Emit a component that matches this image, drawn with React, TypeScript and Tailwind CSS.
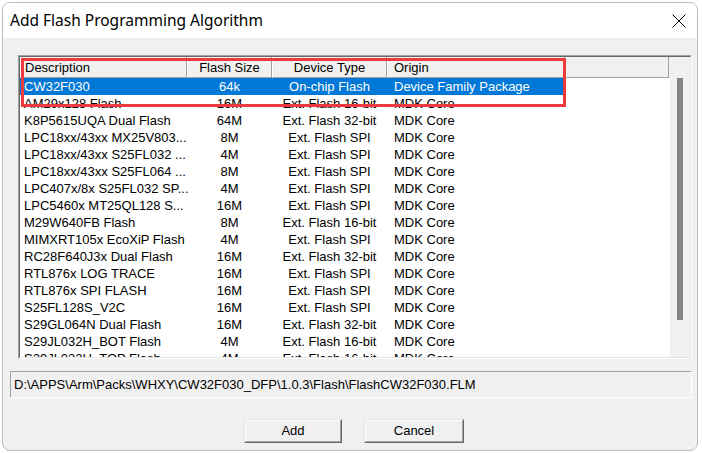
import React from "react";

type Algo = {
  name: string;
  size: string;
  type: string;
  origin: string;
};

const algorithms: Algo[] = [
  { name: "CW32F030", size: "64k", type: "On-chip Flash", origin: "Device Family Package" },
  { name: "AM29x128 Flash", size: "16M", type: "Ext. Flash 16-bit", origin: "MDK Core" },
  { name: "K8P5615UQA Dual Flash", size: "64M", type: "Ext. Flash 32-bit", origin: "MDK Core" },
  { name: "LPC18xx/43xx MX25V803...", size: "8M", type: "Ext. Flash SPI", origin: "MDK Core" },
  { name: "LPC18xx/43xx S25FL032 ...", size: "4M", type: "Ext. Flash SPI", origin: "MDK Core" },
  { name: "LPC18xx/43xx S25FL064 ...", size: "8M", type: "Ext. Flash SPI", origin: "MDK Core" },
  { name: "LPC407x/8x S25FL032 SP...", size: "4M", type: "Ext. Flash SPI", origin: "MDK Core" },
  { name: "LPC5460x MT25QL128 S...", size: "16M", type: "Ext. Flash SPI", origin: "MDK Core" },
  { name: "M29W640FB Flash", size: "8M", type: "Ext. Flash 16-bit", origin: "MDK Core" },
  { name: "MIMXRT105x EcoXiP Flash", size: "4M", type: "Ext. Flash SPI", origin: "MDK Core" },
  { name: "RC28F640J3x Dual Flash", size: "16M", type: "Ext. Flash 32-bit", origin: "MDK Core" },
  { name: "RTL876x LOG TRACE", size: "16M", type: "Ext. Flash SPI", origin: "MDK Core" },
  { name: "RTL876x SPI FLASH", size: "16M", type: "Ext. Flash SPI", origin: "MDK Core" },
  { name: "S25FL128S_V2C", size: "16M", type: "Ext. Flash SPI", origin: "MDK Core" },
  { name: "S29GL064N Dual Flash", size: "16M", type: "Ext. Flash 32-bit", origin: "MDK Core" },
  { name: "S29JL032H_BOT Flash", size: "4M", type: "Ext. Flash 16-bit", origin: "MDK Core" },
  { name: "S29JL032H_TOP Flash", size: "4M", type: "Ext. Flash 16-bit", origin: "MDK Core" }
];

function HeaderCell({ label, className }: { label: string; className: string }) {
  return (
    <div
      className={`flex h-full items-center border-r border-b border-l border-r-[#a0a0a0] border-b-[#a0a0a0] border-l-white ${className}`}
    >
      {label}
    </div>
  );
}

function DialogButton({ label, width }: { label: string; width: string }) {
  return (
    <button
      type="button"
      className={`${width} h-[24px] border border-t-[#e3e3e3] border-l-[#e3e3e3] border-r-[#696969] border-b-[#696969] bg-[#f0f0f0]`}
    >
      <div className="flex h-full w-full items-center justify-center border border-t-white border-l-white border-r-[#a0a0a0] border-b-[#a0a0a0] text-[13px] text-black">
        {label}
      </div>
    </button>
  );
}

export default function App() {
  return (
    <div className="h-[453px] w-[702px] overflow-hidden bg-white pl-[2px] pt-[2px] font-['Liberation_Sans',Arial,sans-serif]">
      <div className="flex h-[449px] w-[696px] flex-col overflow-hidden rounded-[8px] border border-[#bcbcbc] bg-[#f0f0f0]">
        {/* title bar */}
        <div className="flex h-[35px] shrink-0 items-center justify-between bg-white pl-[7px] pr-[11px]">
          <span className="font-['Noto_Sans',sans-serif] text-[15.5px] text-black">
            Add Flash Programming Algorithm
          </span>
          <svg width="14" height="14" viewBox="0 0 14 14" className="text-black">
            <path d="M0.5 0.5 L13.5 13.5 M13.5 0.5 L0.5 13.5" stroke="currentColor" strokeWidth="1" fill="none" />
          </svg>
        </div>

        {/* list box */}
        <div className="ml-[15px] mt-[17px] h-[304px] w-[674px] shrink-0 border border-[#a0a0a0] border-r-white border-b-white">
          <div className="flex h-full w-full border border-[#696969] border-r-[#e3e3e3] border-b-[#e3e3e3]">
            <div className="relative h-full w-[650px] overflow-hidden bg-white text-[13px] text-black">
              <div className="flex h-[21px] bg-[#f0f0f0] leading-[19px]">
                <HeaderCell label="Description" className="w-[167px] pl-[4px]" />
                <HeaderCell label="Flash Size" className="w-[85px] justify-center" />
                <HeaderCell label="Device Type" className="w-[115px] justify-center" />
                <HeaderCell label="Origin" className="w-[178px] pl-[6px]" />
                <HeaderCell label="" className="w-[104px]" />
              </div>
              {algorithms.map((algo, index) => (
                <div
                  key={algo.name}
                  className={`flex h-[17px] w-[545px] leading-[18px] ${index === 0 ? "bg-[#0078d7] text-white" : ""}`}
                >
                  <div className="w-[167px] whitespace-nowrap pl-[4px]">{algo.name}</div>
                  <div className="w-[85px] text-center">{algo.size}</div>
                  <div className="w-[115px] whitespace-nowrap text-center">{algo.type}</div>
                  <div className="w-[178px] whitespace-nowrap pl-[7px]">{algo.origin}</div>
                </div>
              ))}

              {/* annotation box */}
              <div className="pointer-events-none absolute left-[1px] top-[1px] h-[49px] w-[545px] border-[3px] border-[#ec3b3f]" />
            </div>
            <div className="h-full w-[20px] bg-[#f0f0f0] pl-[7px] pt-[21px]">
              <div className="h-[242px] w-[6px] bg-[#858585]" />
            </div>
          </div>
        </div>

        {/* path field */}
        <div className="ml-[7px] mt-[12px] flex h-[27px] w-[682px] shrink-0 items-center border border-[#a0a0a0] border-r-white border-b-white bg-[#f0f0f0] pl-[3px] text-[13px] text-black">
          D:\APPS\Arm\Packs\WHXY\CW32F030_DFP\1.0.3\Flash\FlashCW32F030.FLM
        </div>

        {/* buttons */}
        <div className="ml-[241px] mt-[21px] flex gap-[22px]">
          <DialogButton label="Add" width="w-[98px]" />
          <DialogButton label="Cancel" width="w-[100px]" />
        </div>
      </div>
    </div>
  );
}
